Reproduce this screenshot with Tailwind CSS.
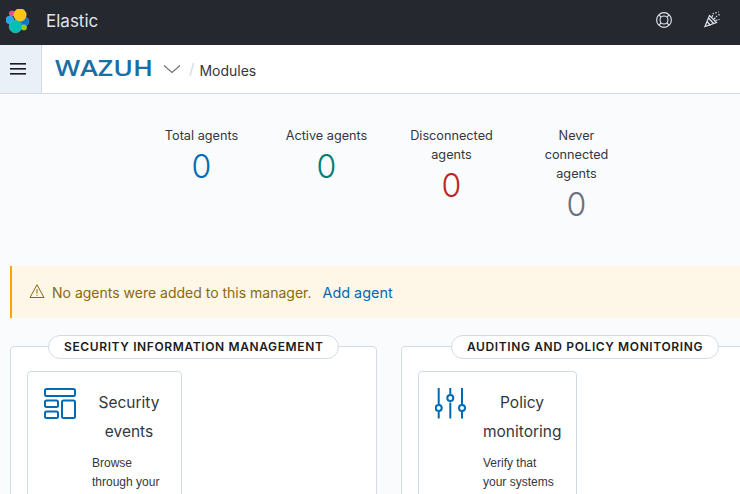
<!DOCTYPE html>
<html lang="en">
<head>
<meta charset="UTF-8">
<title>Wazuh Modules</title>
<script src="https://cdn.jsdelivr.net/npm/@tailwindcss/browser@4"></script>
</head>
<body class="bg-[#fafbfd] font-['Inter',sans-serif] text-[#343741] h-[494px] w-[740px] overflow-hidden">
<!-- top bar -->
<header class="h-[45px] bg-[#25282f] flex items-center justify-between pb-[5px]">
  <div class="flex items-center">
    <svg class="ml-[6px] mt-[2px] w-[25px] h-[25px]" viewBox="6 8 25 25" stroke="#fff" stroke-opacity="0.35" stroke-width="0.5">
      <circle cx="12" cy="12.5" r="2.8" fill="#e8478b"/>
      <circle cx="9.8" cy="19" r="4" fill="#1ba9f5"/>
      <circle cx="25" cy="20.5" r="4" fill="#0077cc"/>
      <circle cx="24" cy="26.5" r="2.8" fill="#93c90e"/>
      <circle cx="20" cy="14" r="6.4" fill="#fec514"/>
      <circle cx="15.5" cy="25.5" r="6.5" fill="#00bfb3"/>
    </svg>
    <span class="ml-[15px] mt-[3px] text-[17px] text-[#dfe5ef]">Elastic</span>
  </div>
  <div class="flex items-center">
    <svg class="w-[16px] h-[16px] mr-[32px]" viewBox="0 0 16 16" fill="none" stroke="#dfe5ef" stroke-width="1.1">
      <circle cx="8" cy="8" r="7.4"/>
      <circle cx="8" cy="8" r="4"/>
      <path d="M3 3l2.2 2.2M13 3l-2.2 2.2M3 13l2.2-2.2M13 13l-2.2-2.2"/>
    </svg>
    <svg class="w-[17px] h-[17px] mr-[19px] -mt-[2px]" viewBox="0 0 17 17" fill="none" stroke="#dfe5ef" stroke-width="1.2">
      <path d="M1 15.5 5.5 4.5l7 7zM3 10.5l3.5 4M4.5 7l5.5 6"/>
      <path d="M8 6 9.5 2M10 8l3-3M11.5 9.5l4-1M12 1v1.5M15 3v1.5M14 1h.8" stroke-dasharray="2 1"/>
    </svg>
  </div>
</header>

<!-- breadcrumb bar -->
<div class="h-[49px] bg-white border-b border-[#d3dae6] flex items-center">
  <button class="w-[42px] h-[48px] bg-[#e9f0f7] border-r border-[#d3dae6] flex items-center justify-center pr-[6px]">
    <svg class="w-[16px] h-[12px]" viewBox="0 0 16 12" fill="#1a1c21">
      <rect y="0" width="16" height="1.6"/>
      <rect y="5" width="16" height="1.6"/>
      <rect y="10" width="16" height="1.6"/>
    </svg>
  </button>
  <span class="ml-[13px] w-[98px] text-[#1a6ea6] font-['Open_Sans',sans-serif] font-semibold text-[21px] leading-none scale-x-[1.27] origin-left -mt-[1px] whitespace-nowrap">WAZUH</span>
  <svg class="ml-[10px] w-[18px] h-[10px]" viewBox="0 0 18 10" fill="none" stroke="#69707d" stroke-width="1.1"><path d="M1 1.5l8 7 8-7"/></svg>
  <span class="ml-[8px] text-[15px] text-[#d3dae6]">/</span>
  <span class="ml-[5px] mt-[2px] text-[14px] text-[#343741]">Modules</span>
</div>

<!-- agent counters -->
<div class="w-[778px] flex justify-center pt-[32px] h-[172px]">
  <div class="w-[125px] text-center text-[12.7px] leading-[19px] px-[16px]">
    Total agents
    <div class="mt-[3px] text-[32px] leading-[38px] font-light text-[#006bb4]">0</div>
  </div>
  <div class="w-[125px] text-center text-[12.7px] leading-[19px] px-[16px]">
    Active agents
    <div class="mt-[3px] text-[32px] leading-[38px] font-light text-[#017d73]">0</div>
  </div>
  <div class="w-[125px] text-center text-[12.7px] leading-[19px] px-[16px]">
    Disconnected agents
    <div class="mt-[3px] text-[32px] leading-[38px] font-light text-[#bd271e]">0</div>
  </div>
  <div class="w-[125px] text-center text-[12.7px] leading-[19px] px-[16px]">
    Never connected agents
    <div class="mt-[3px] text-[32px] leading-[38px] font-light text-[#69707d]">0</div>
  </div>
</div>

<!-- warning callout -->
<div class="ml-[10px] w-[759px] h-[52px] bg-[#fef6e6] border-l-2 border-[#f5a700] flex items-center pl-[17px] text-[14px]">
  <svg class="w-[16px] h-[16px] -mt-[3px]" viewBox="0 0 16 16" fill="none" stroke="#8a6a0a" stroke-width="1">
    <path d="M8 1.8 15 14.5H1z" stroke-linejoin="round"/>
    <path d="M8 6v4.5M8 11.8v1"/>
  </svg>
  <span class="ml-[7px] text-[#8a6a0a]">No agents were added to this manager.</span>
  <span class="ml-[11px] mt-[1px] text-[14.4px] text-[#006bb4]">Add agent</span>
</div>

<!-- module groups -->
<div class="w-[779px] px-[10px] pt-[28px] grid grid-cols-[367px_367px] gap-[24px]">
  <section class="relative h-[200px] bg-white border border-[#d3dae6] rounded-[4px] pt-[24px] pl-[16px]">
    <div class="absolute -top-[12px] left-[37px] h-[24px] px-[15px] rounded-full bg-white border border-[#d3dae6] flex items-center text-[12px] font-semibold tracking-[0.62px] text-[#1a1c21] whitespace-nowrap">SECURITY INFORMATION MANAGEMENT</div>
    <article class="w-[155px] h-[160px] bg-white border border-[#d3dae6] rounded-[4px] flex pl-[16px] pt-[16px]">
      <svg class="w-[32px] h-[32px] shrink-0" viewBox="0 0 32 32" fill="none" stroke="#006bb4" stroke-width="2">
        <rect x="1" y="1" width="30" height="7" rx="1.5"/>
        <rect x="1" y="12.5" width="13" height="6.5" rx="1.5"/>
        <rect x="1" y="23.5" width="13" height="6.5" rx="1.5"/>
        <rect x="18" y="12.5" width="13" height="17.5" rx="1.5"/>
      </svg>
      <div class="ml-[16px] w-[74px] shrink-0">
        <h3 class="text-[15.5px] leading-[29px] text-center -mx-[4px] mb-[8px]">Security events</h3>
        <p class="text-[12px] leading-[19px] font-['Liberation_Sans',sans-serif]">Browse through your</p>
      </div>
    </article>
  </section>
  <section class="relative h-[200px] bg-white border border-[#d3dae6] rounded-[4px] pt-[24px] pl-[16px]">
    <div class="absolute -top-[12px] left-[49px] h-[24px] px-[15px] rounded-full bg-white border border-[#d3dae6] flex items-center text-[12px] font-semibold tracking-[0.62px] text-[#1a1c21] whitespace-nowrap">AUDITING AND POLICY MONITORING</div>
    <article class="w-[159px] h-[160px] bg-white border border-[#d3dae6] rounded-[4px] flex pl-[16px] pt-[16px]">
      <svg class="w-[32px] h-[32px] shrink-0" viewBox="0 0 32 32" fill="none" stroke="#006bb4" stroke-width="2">
        <path d="M3.7 0v16.5M3.7 24v6.5M15.3 0v6M15.3 14.5v16M27 0v16.5M27 24v6.5"/>
        <circle cx="3.7" cy="20" r="3"/>
        <circle cx="15.3" cy="10" r="3"/>
        <circle cx="27" cy="20" r="3"/>
      </svg>
      <div class="ml-[16px] w-[78px] shrink-0">
        <h3 class="text-[15.5px] leading-[29px] text-center mb-[8px]">Policy monitoring</h3>
        <p class="text-[12px] leading-[19px] font-['Liberation_Sans',sans-serif]">Verify that your systems</p>
      </div>
    </article>
  </section>
</div>
</body>
</html>
